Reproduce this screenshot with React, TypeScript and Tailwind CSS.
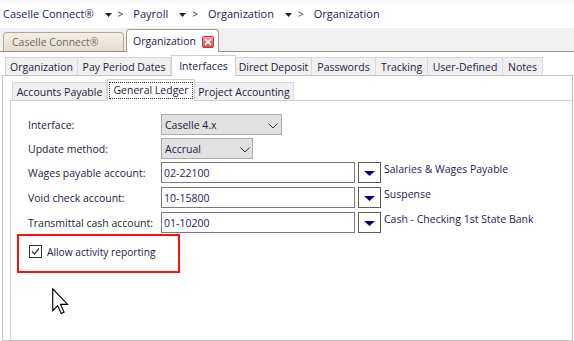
import React from "react";

const Tri = () => (
  <svg width="7" height="4" viewBox="0 0 7 4" className="block">
    <polygon points="0,0 7,0 3.5,4" fill="#222" />
  </svg>
);

const Crumb = ({ text, last }: { text: string; last?: boolean }) => (
  <div className="flex items-center">
    <span>{text}</span>
    {!last && (
      <>
        <span className="ml-[11px] mt-[1px]"><Tri /></span>
        <span className="ml-[6px] text-[10px] text-[#333]">&gt;</span>
        <span className="w-[10px]" />
      </>
    )}
  </div>
);

const outerTabs: [string, number][] = [
  ["Organization", 73],
  ["Pay Period Dates", 93],
  ["Interfaces", 65],
  ["Direct Deposit", 76],
  ["Passwords", 64],
  ["Tracking", 52],
  ["User-Defined", 75],
  ["Notes", 40],
];

const Chevron = () => (
  <svg width="10" height="6" viewBox="0 0 10 6" className="block">
    <polyline points="0.5,0.5 5,5 9.5,0.5" fill="none" stroke="#333" strokeWidth="1" />
  </svg>
);

const Select = ({ value, w, chevronLeft }: { value: string; w: number; chevronLeft: number }) => (
  <div
    className="relative h-[21px] bg-[#e1e1e1] border border-[#adadad] flex items-center pl-[3px] text-[#1f1a4a]"
    style={{ width: w }}
  >
    {value}
    <span className="absolute top-[8px]" style={{ left: chevronLeft }}>
      <Chevron />
    </span>
  </div>
);

const Lookup = ({ value, desc }: { value: string; desc: string }) => (
  <div className="flex items-start">
    <div className="w-[194px] h-[21px] border border-[#7a7a7a] bg-white flex items-center pl-[2px] text-[#2a1a5a]">
      {value}
    </div>
    <div className="ml-[3px] w-[23px] h-[21px] border border-[#5e5e5e] bg-white flex items-center justify-center">
      <svg width="11" height="5" viewBox="0 0 11 5" className="block mt-[1px]">
        <polygon points="0,0 11,0 5.5,5" fill="#00007a" />
      </svg>
    </div>
    <div className="ml-[3px] leading-[14px] text-[#2a1a5a] whitespace-nowrap">{desc}</div>
  </div>
);

const Row = ({ label, children, mt }: { label: string; children: React.ReactNode; mt: string }) => (
  <div className={`flex items-center ${mt}`}>
    <div className="w-[133px] text-[#1c1c3c]">{label}</div>
    {children}
  </div>
);

export default function App() {
  return (
    <div className="relative w-[574px] h-[341px] overflow-hidden bg-white font-['Open_Sans','Noto_Sans',sans-serif] text-[10.5px] leading-[14px] flex flex-col whitespace-nowrap">
      {/* breadcrumb */}
      <div className="h-[28px] flex items-center pl-[3px] text-[11px] text-[#1c1a5e] bg-gradient-to-b from-[#f4f4f4] to-white to-[20%] shrink-0">
        <Crumb text="Caselle Connect®" />
        <Crumb text="Payroll" />
        <Crumb text="Organization" />
        <Crumb text="Organization" last />
      </div>

      {/* document tabs */}
      <div className="h-[24px] bg-[#f0f0f0] border-b border-[#9d917f] flex items-end pl-[3px] shrink-0">
        <div className="w-[121px] h-[19px] rounded-t-[4px] border border-b-0 border-[#b5a893] bg-gradient-to-b from-[#f3f0ea] to-[#e4ddd0] flex items-center pl-[8px] text-[#7a6458] text-[10.5px]">
          Caselle Connect®
        </div>
        <div className="ml-[2px] -mb-px w-[93px] h-[23px] rounded-t-[4px] border border-b-0 border-[#a89b88] bg-white flex items-center pl-[6px] text-[#1c1a4a] text-[10.5px]">
          <span>Organization</span>
          <span className="ml-auto mr-[4px] mt-[1px] w-[12px] h-[12px] border border-[#b84040] rounded-[2px] bg-gradient-to-b from-[#f0a0a0] to-[#d85050] flex items-center justify-center">
            <svg width="8" height="8" viewBox="0 0 8 8" className="block">
              <path d="M1,1 L7,7 M7,1 L1,7" stroke="white" strokeWidth="1.6" />
            </svg>
          </span>
        </div>
      </div>

      {/* content */}
      <div className="flex-1 flex flex-col pt-[3px] text-[#1c1c3c]">
        <div className="flex items-end pl-[5px] h-[20px]">
          {outerTabs.map(([t, w]) =>
            t === "Interfaces" ? (
              <div
                key={t}
                className="relative z-10 -mb-px h-[21px] bg-white border border-b-0 border-[#d0d0d0] flex items-start justify-center pt-[3px]"
                style={{ width: w }}
              >
                {t}
              </div>
            ) : (
              <div
                key={t}
                className="h-[18px] bg-[#f0f0f0] border border-b-0 border-l-0 first:border-l border-[#d9d9d9] flex items-center justify-center"
                style={{ width: w }}
              >
                {t}
              </div>
            )
          )}
        </div>

        {/* outer panel */}
        <div className="ml-[2px] w-[571px] flex-1 border border-[#c4c4c4] flex flex-col pl-[7px] pt-[3px]">
          <div className="flex items-end pl-[2px] h-[21px]">
            <div className="w-[95px] h-[18px] bg-[#f0f0f0] border border-b-0 border-[#d9d9d9] flex items-center justify-center">
              Accounts Payable
            </div>
            <div className="relative z-10 -mb-px w-[88px] h-[22px] bg-white border border-b-0 border-[#d0d0d0] flex items-start justify-center pt-[2px]">
              <span className="border border-dotted border-[#333] px-[3px] h-[17px] leading-[15px] whitespace-nowrap">General Ledger</span>
            </div>
            <div className="w-[99px] h-[18px] bg-[#f0f0f0] border border-b-0 border-l-0 border-[#d9d9d9] flex items-center justify-center">
              Project Accounting
            </div>
          </div>

          {/* inner panel */}
          <div className="flex-1 border-l border-t border-[#d0d0d0] pt-[13px] pl-[6px]">
            <div className="pl-[11px]">
              <Row label="Interface:" mt="mt-0">
                <Select value="Caselle 4.x" w={121} chevronLeft={106} />
              </Row>
              <Row label="Update method:" mt="mt-[3px]">
                <Select value="Accrual" w={92} chevronLeft={78} />
              </Row>
              <Row label="Wages payable account:" mt="mt-[3px]">
                <Lookup value="02-22100" desc="Salaries & Wages Payable" />
              </Row>
              <Row label="Void check account:" mt="mt-[4px]">
                <Lookup value="10-15800" desc="Suspense" />
              </Row>
              <Row label="Transmittal cash account:" mt="mt-[4px]">
                <Lookup value="01-10200" desc="Cash - Checking 1st State Bank" />
              </Row>
            </div>
            <div className="mt-[1px] w-[163px] h-[39px] border-2 border-[#ff1010] pl-[10px] pt-[9px]">
              <div className="flex items-center h-[13px]">
                <div className="w-[13px] h-[13px] border border-[#333] bg-white flex items-center justify-center">
                  <svg width="9" height="9" viewBox="0 0 9 9" className="block">
                    <polyline points="1,4.5 3.5,7 8,1.5" fill="none" stroke="#333" strokeWidth="1.2" />
                  </svg>
                </div>
                <span className="ml-[5px] text-[10.2px] text-[#1c1c3c]">Allow activity reporting</span>
              </div>
            </div>
          </div>
        </div>
      </div>

      {/* mouse cursor */}
      <svg
        width="17"
        height="27"
        viewBox="0 0 12 19"
        className="absolute left-[52px] top-[288px]"
      >
        <polygon
          points="0.5,0.5 0.5,16 4,12.5 6.5,18 8.5,17 6,11.5 11,11.5"
          fill="white"
          stroke="black"
          strokeWidth="0.8"
          strokeLinejoin="miter"
        />
      </svg>
    </div>
  );
}
